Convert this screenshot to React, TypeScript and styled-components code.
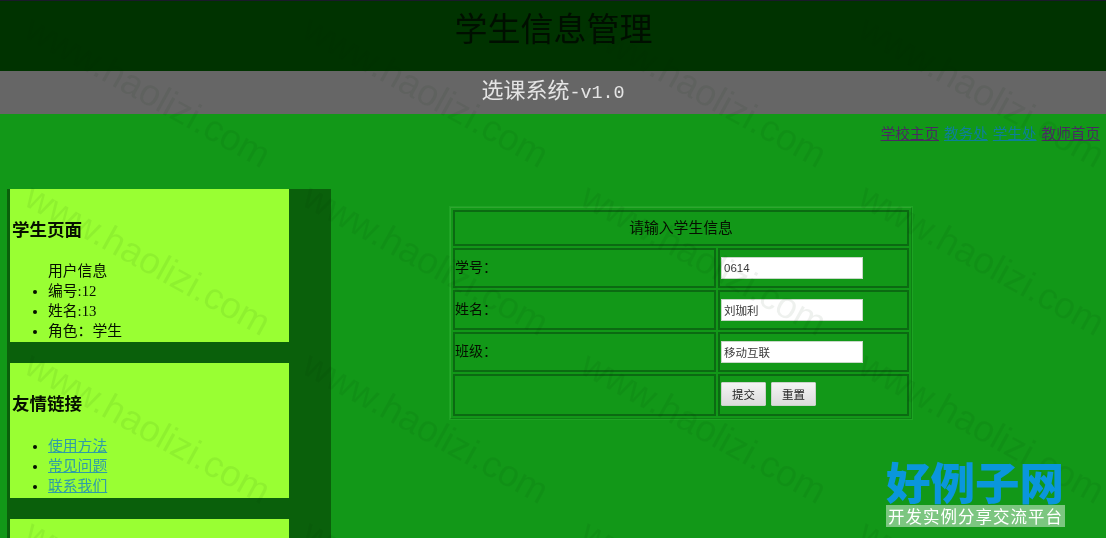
import styled, { createGlobalStyle } from "styled-components";

const serif = `"Liberation Serif", "Noto Sans CJK SC", serif`;

const GlobalStyle = createGlobalStyle`
  html, body {
    margin: 0;
    padding: 0;
    height: 538px;
    overflow: hidden;
    background: #129818;
  }
`;

const Page = styled.div`
  position: relative;
  width: 1106px;
  height: 538px;
  overflow: hidden;
  background: #129818;
  font-family: ${serif};
  color: #061000;
  filter: blur(0.45px);
`;

const Header = styled.header`
  height: 70px;
  border-top: 1px solid #1a1a2a;
  background: #003300;
  text-align: center;
  h1 {
    margin: 0;
    padding-left: 1px;
    font-size: 33px;
    line-height: 58px;
    font-weight: 400;
    color: #000f00;
  }
`;

const SubHeader = styled.div`
  height: 43px;
  background: #666666;
  color: #e4e4e4;
  text-align: center;
  font-size: 22px;
  line-height: 39px;
  span {
    font-family: "Liberation Mono", monospace;
    font-size: 18.4px;
  }
`;

const TopLinks = styled.nav`
  height: 75px;
  box-sizing: border-box;
  padding: 10px 6px 0 0;
  display: flex;
  justify-content: flex-end;
  gap: 5px;
  font-size: 14.6px;
  line-height: 20px;
`;

const TopLink = styled.a<{ $visited?: boolean }>`
  color: ${(p) => (p.$visited ? "#4a2a62" : "#0d7f9a")};
  text-decoration: underline;
`;

const Content = styled.div`
  display: flex;
  align-items: flex-start;
`;

const Sidebar = styled.aside`
  width: 324px;
  height: 349px;
  margin-left: 7px;
  box-sizing: border-box;
  padding: 0 42px 0 3px;
  background: #0a600b;
  display: flex;
  flex-direction: column;
  gap: 21px;
  flex-shrink: 0;
`;

const Card = styled.section<{ $height: number }>`
  height: ${(p) => p.$height}px;
  flex-shrink: 0;
  box-sizing: border-box;
  background: #99ff33;
  padding-left: 2px;
  overflow: hidden;
  h3 {
    margin: 0;
    padding-top: 30px;
    font-size: 17.5px;
    line-height: 22px;
    font-weight: 700;
  }
`;

const List = styled.ul<{ $top: number }>`
  margin: ${(p) => p.$top}px 0 0;
  padding: 0 0 0 36px;
  font-size: 14.8px;
  line-height: 20px;
  a {
    color: #2f9ca8;
    text-decoration: underline;
  }
`;

const Caption = styled.div`
  margin: 20px 0 0 36px;
  font-size: 14.8px;
  line-height: 20px;
`;

const Main = styled.main`
  margin: 18px 0 0 119px;
`;

const FormTable = styled.table`
  width: 462px;
  box-sizing: border-box;
  border-collapse: separate;
  border-spacing: 2px;
  border: 1px solid;
  border-color: #2fa62f #0e8014 #0e8014 #2fa62f;
  box-shadow: 0 0 0 1px #1ea324;
  table-layout: fixed;
  td {
    padding: 0;
    border: 2px solid #0b6a12;
    font-size: 14px;
    line-height: 18px;
    box-sizing: border-box;
  }
`;

const Row = styled.tr<{ $height: number }>`
  height: ${(p) => p.$height}px;
`;

const TitleCell = styled.td`
  text-align: center;
  font-size: 14.8px !important;
`;

const LabelCell = styled.td`
  padding-bottom: 1px !important;
`;

const FieldCell = styled.td`
  padding-left: 1px !important;
`;

const TextInput = styled.input`
  display: block;
  width: 142px;
  height: 22px;
  box-sizing: border-box;
  margin: 0;
  padding: 0 2px;
  border: 1px solid #c8d8c8;
  background: #ffffff;
  color: #3a3a3a;
  font-family: "Liberation Sans", "Noto Sans CJK SC", sans-serif;
  font-size: 11.5px;
`;

const Buttons = styled.div`
  display: flex;
  gap: 5px;
  padding-bottom: 3px;
`;

const Button = styled.button`
  width: 45px;
  height: 24px;
  padding: 0;
  border: 1px solid #c9d2c9;
  border-radius: 1px;
  background: linear-gradient(#f4f4f4, #dcdcdc);
  color: #222222;
  font-family: "Liberation Sans", "Noto Sans CJK SC", sans-serif;
  font-size: 11.5px;
`;

const Watermark = styled.div`
  position: absolute;
  left: 9px;
  top: 8px;
  display: grid;
  grid-template-columns: repeat(4, 278px);
  grid-auto-rows: 168px;
  pointer-events: none;
  span {
    place-self: center;
    transform: rotate(29deg);
    white-space: nowrap;
    font-family: "Liberation Sans", sans-serif;
    font-size: 37px;
    color: rgba(0, 40, 0, 0.065);
  }
`;

const Logo = styled.div`
  position: absolute;
  left: 886px;
  top: 457px;
  width: 179px;
  strong {
    display: block;
    height: 48px;
    font-family: "Noto Sans CJK SC", serif;
    font-size: 44.5px;
    line-height: 48px;
    font-weight: 900;
    white-space: nowrap;
    color: #0a96dc;
  }
  small {
    display: block;
    height: 22px;
    background: rgba(255, 255, 255, 0.45);
    color: #ffffff;
    font-family: "Noto Sans CJK SC", sans-serif;
    font-size: 16.5px;
    letter-spacing: 1px;
    line-height: 22px;
    text-align: center;
    white-space: nowrap;
  }
`;

const topLinks = [
  { label: "学校主页", visited: true },
  { label: "教务处" },
  { label: "学生处" },
  { label: "教师首页", visited: true },
];

const fields = [
  { label: "学号：", value: "0614" },
  { label: "姓名：", value: "刘珈利" },
  { label: "班级：", value: "移动互联" },
];

const marks = Array.from({ length: 16 }, (_, i) => i);

const App = () => {
  return (
    <Page>
      <GlobalStyle />
      <Header>
        <h1>学生信息管理</h1>
      </Header>
      <SubHeader>
        选课系统<span>-v1.0</span>
      </SubHeader>
      <TopLinks>
        {topLinks.map((link) => (
          <TopLink href="#" key={link.label} $visited={link.visited}>
            {link.label}
          </TopLink>
        ))}
      </TopLinks>
      <Content>
        <Sidebar>
          <Card $height={153}>
            <h3>学生页面</h3>
            <Caption>用户信息</Caption>
            <List $top={0}>
              <li>编号:12</li>
              <li>姓名:13</li>
              <li>角色：学生</li>
            </List>
          </Card>
          <Card $height={135}>
            <h3>友情链接</h3>
            <List $top={21}>
              <li><a href="#">使用方法</a></li>
              <li><a href="#">常见问题</a></li>
              <li><a href="#">联系我们</a></li>
            </List>
          </Card>
          <Card $height={60} />
        </Sidebar>
        <Main>
          <FormTable>
            <colgroup>
              <col width={263} />
              <col />
            </colgroup>
            <tbody>
              <Row $height={36}>
                <TitleCell colSpan={2}>请输入学生信息</TitleCell>
              </Row>
              {fields.map((field) => (
                <Row $height={40} key={field.label}>
                  <LabelCell>{field.label}</LabelCell>
                  <FieldCell>
                    <TextInput defaultValue={field.value} />
                  </FieldCell>
                </Row>
              ))}
              <Row $height={42}>
                <LabelCell />
                <FieldCell>
                  <Buttons>
                    <Button>提交</Button>
                    <Button>重置</Button>
                  </Buttons>
                </FieldCell>
              </Row>
            </tbody>
          </FormTable>
        </Main>
      </Content>
      <Watermark>
        {marks.map((i) => (
          <span key={i}>www.haolizi.com</span>
        ))}
      </Watermark>
      <Logo>
        <strong>好例子网</strong>
        <small>开发实例分享交流平台</small>
      </Logo>
    </Page>
  );
};

export default App;
